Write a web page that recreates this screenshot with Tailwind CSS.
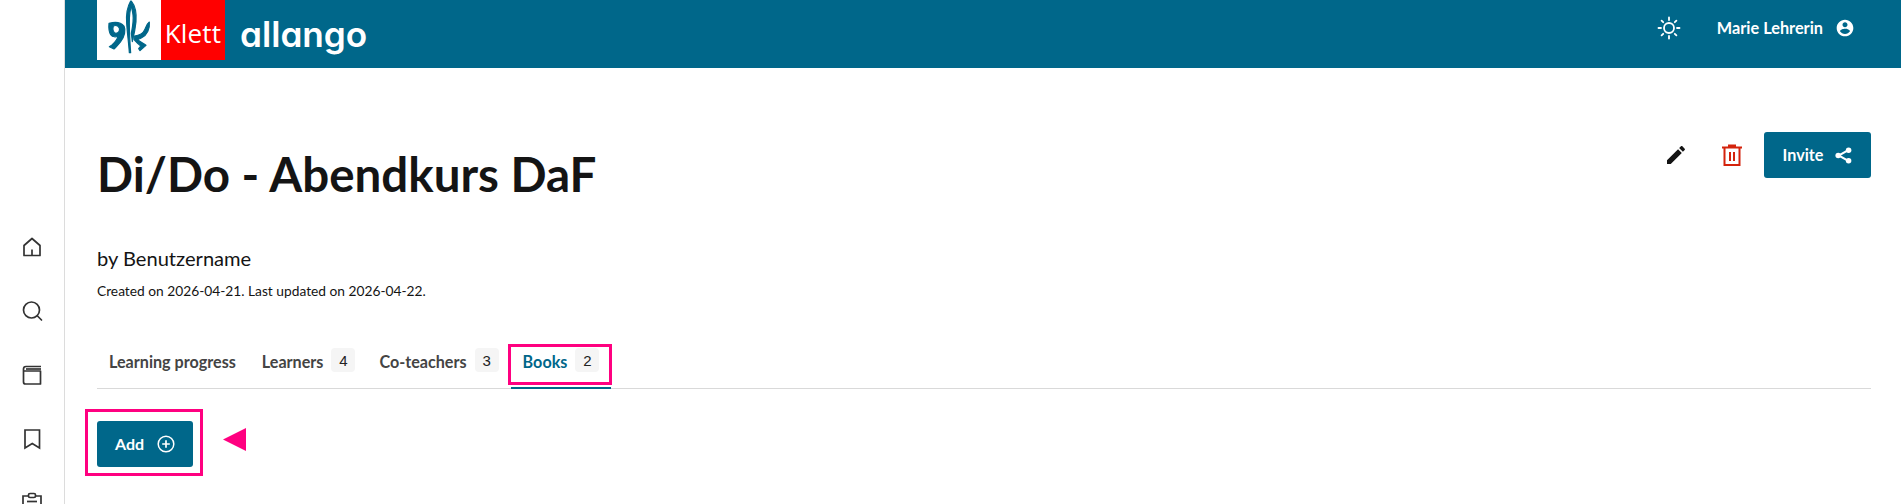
<!DOCTYPE html>
<html lang="en">
<head>
  <meta charset="utf-8" />
  <title>Di/Do - Abendkurs DaF</title>
  <script src="https://cdn.jsdelivr.net/npm/@tailwindcss/browser@4"></script>
</head>
<body class="h-[504px] overflow-hidden flex bg-white text-[#141414] font-['Lato',sans-serif]">
  <!-- Sidebar -->
  <aside class="w-[65px] shrink-0 border-r border-[#dcdcdc] flex flex-col items-center pt-[235px] gap-10 text-[#333]">
    <svg class="size-6 shrink-0" viewBox="0 0 24 24" fill="none" stroke="currentColor" stroke-width="1.7" stroke-linejoin="round"><path d="M4 10.500 12 3.500l8 7V20.500H4z"/><path d="M12 20.500v-6"/></svg>
    <svg class="size-6 shrink-0" viewBox="0 0 24 24" fill="none" stroke="currentColor" stroke-width="1.7" stroke-linecap="round"><circle cx="11.500" cy="11" r="8"/><path d="m17.500 17 4 4"/></svg>
    <svg class="size-6 shrink-0" viewBox="0 0 24 24" fill="none" stroke="currentColor" stroke-width="1.7" stroke-linejoin="round"><path d="M21 3.500H6A2.500 2.500 0 0 0 3.500 6v13A2 2 0 0 0 5.500 21H20.500V8H3.800"/><path d="M6 6h15"/></svg>
    <svg class="size-6 shrink-0" viewBox="0 0 24 24" fill="none" stroke="currentColor" stroke-width="1.7" stroke-linejoin="miter"><path d="M5 3h14.500v18l-7.250-4.500L5 21z"/></svg>
    <svg class="size-6 shrink-0" viewBox="0 0 24 24" fill="none" stroke="currentColor" stroke-width="1.7"><path d="M8.500 5H3v17h18V5h-5.500"/><rect x="8.500" y="2.500" width="7" height="4" rx="1.500"/><path d="M7 10.500h10"/></svg>
  </aside>

  <div class="flex-1 min-w-0 flex flex-col">
    <!-- Header -->
    <header class="h-[68px] shrink-0 bg-[#00678a] text-white flex pl-8 pr-[46px]">
      <div class="flex h-[60px]">
        <div class="w-16 bg-white">
          <svg class="w-16 h-[60px]" viewBox="21 0 192 180" fill="#00678a" stroke="#00678a" stroke-width="3.500" stroke-linejoin="round">
            <path d="M122 3C112 20 108 45 110 70C112 100 116 130 118 158L122 158C120 130 118 95 118 70C118 50 119 30 124 20Z"/>
            <path d="M124 3C134 15 140 40 138 65C136 85 132 105 127 125L124 100C128 80 131 60 129 45C128 35 126 28 124 20Z"/>
            <path fill-rule="evenodd" d="M57 70C72 66 92 66 102 78C108 90 104 110 92 125C84 135 78 142 72 147L58 140L66 135C74 128 82 118 85 107C78 112 68 112 62 104C56 94 56 80 57 70ZM70 78C67 88 70 100 78 100C86 100 90 92 88 84C84 77 76 75 70 78Z"/>
            <path d="M178 66C180 85 172 105 155 113C150 116 146 117 142 118C150 125 160 130 168 136L150 152L146 146L152 138C145 132 136 125 132 118L133 108C147 107 160 100 165 88C168 80 170 72 178 66Z"/>
          </svg>
        </div>
        <div class="w-16 bg-[#ff0000] flex items-center justify-center pt-[6px] text-[26px] tracking-[0.2px] font-['Open_Sans',sans-serif]">Klett</div>
        <div class="ml-[15px] pt-[10px] text-[35.200px] font-semibold leading-[48px] font-['Inter',sans-serif] [font-feature-settings:'cv11']">allango</div>
      </div>
      <div class="ml-auto flex items-start gap-[36px] pt-4">
        <svg class="size-6" viewBox="0 0 24 24" fill="none" stroke="currentColor" stroke-width="1.800" stroke-linecap="round"><circle cx="12" cy="12" r="5"/><path d="M12 1.500v2.500M12 20v2.500M1.500 12H4M20 12h2.500M4.600 4.600l1.600 1.600M17.800 17.800l1.600 1.600M4.600 19.400l1.600-1.600M17.800 6.200l1.600-1.600"/></svg>
        <div class="flex items-center gap-3 h-6">
          <span class="text-[16.300px] font-bold">Marie Lehrerin</span>
          <svg class="size-5" viewBox="0 0 24 24" fill="currentColor"><path d="M12 2C6.480 2 2 6.480 2 12s4.480 10 10 10 10-4.480 10-10S17.520 2 12 2zm0 3c1.660 0 3 1.340 3 3s-1.340 3-3 3-3-1.340-3-3 1.340-3 3-3zm0 14.200c-2.500 0-4.710-1.280-6-3.220.03-1.990 4-3.080 6-3.080 1.990 0 5.970 1.090 6 3.080-1.290 1.940-3.500 3.220-6 3.220z"/></svg>
        </div>
      </div>
    </header>

    <main class="pl-8 pr-[30px] pt-16">
      <!-- Title row -->
      <div class="flex justify-between items-start h-[212px]">
        <div class="pt-3">
          <h1 class="text-[47.500px] leading-[60px] font-bold">Di/Do - Abendkurs DaF</h1>
          <p class="mt-[42px] text-[20.100px] leading-6">by Benutzername</p>
          <p class="mt-[11px] text-[13.750px] leading-5">Created on 2026-04-21. Last updated on 2026-04-22.</p>
        </div>
        <div class="flex items-center">
          <button class="size-6 text-[#141414] mr-8">
            <svg class="size-6" viewBox="0 0 24 24" fill="currentColor"><path d="M3 17.250V21h3.750L17.810 9.940l-3.750-3.750L3 17.250zM20.710 7.040c.39-.39.39-1.020 0-1.410l-2.340-2.340c-.39-.39-1.020-.39-1.410 0l-1.830 1.830 3.750 3.750 1.830-1.830z"/></svg>
          </button>
          <button class="size-6 text-[#d4230c] mr-5">
            <svg class="size-6" viewBox="0 0 24 24" fill="none" stroke="currentColor" stroke-width="2"><path d="M2 4.500h20M8 2.500h8M4.500 5v17h15V5M10 9v9M14 9v9"/></svg>
          </button>
          <button class="h-[46px] w-[107px] rounded-[3px] bg-[#00678a] text-white text-[16.200px] font-bold flex items-center justify-center gap-[12px]">
            Invite
            <svg class="size-[17px]" viewBox="0 0 16 16" fill="currentColor" stroke="currentColor"><path d="M12.500 3 3.500 8l9 5" fill="none" stroke-width="1.900"/><circle cx="12.800" cy="3" r="2.600" stroke="none"/><circle cx="3" cy="8" r="2.600" stroke="none"/><circle cx="12.800" cy="13" r="2.600" stroke="none"/></svg>
          </button>
        </div>
      </div>

      <!-- Tabs -->
      <nav class="flex border-b border-[#d9d9d9] h-[45px] text-[16.150px] font-bold text-[#444]">
        <a class="px-3 pt-1 flex items-start leading-[27px] mr-[2px]">Learning progress</a>
        <a class="px-3 pt-1 flex items-start leading-[27px] gap-2">Learners <span class="size-6 pt-px rounded bg-[#f5f5f5] font-['Liberation_Sans',sans-serif] font-normal text-[#222] text-[15px] leading-none flex items-center justify-center">4</span></a>
        <a class="px-3 pt-1 flex items-start leading-[27px] gap-2">Co-teachers <span class="size-6 pt-px rounded bg-[#f5f5f5] font-['Liberation_Sans',sans-serif] font-normal text-[#222] text-[15px] leading-none flex items-center justify-center">3</span></a>
        <a class="relative px-3 pt-1 h-[45px] flex items-start leading-[27px] gap-2 text-[#00678a] border-b-2 border-[#00678a]">Books <span class="size-6 pt-px rounded bg-[#f5f5f5] font-['Liberation_Sans',sans-serif] font-normal text-[#222] text-[15px] leading-none flex items-center justify-center">2</span>
          <span class="absolute left-[-3px] top-0 w-[104px] h-[41px] border-[3px] border-[#ff0080]"></span>
        </a>
      </nav>

      <!-- Add -->
      <div class="relative mt-8">
        <button class="h-[46px] w-[96px] rounded-[3px] bg-[#00678a] text-white text-base font-bold flex items-center justify-center gap-[13px]">
          Add
          <svg class="size-[18px]" viewBox="0 0 18 18" fill="none" stroke="currentColor" stroke-width="1.500"><circle cx="9" cy="9" r="7.800"/><path d="M9 5.200v7.600M5.200 9h7.600" stroke-width="1.700"/></svg>
        </button>
        <span class="absolute left-[-12px] top-[-12px] w-[118px] h-[67px] border-[3px] border-[#ff0080]"></span>
        <span class="absolute left-[126px] top-[7px] w-[23px] h-[23px] bg-[#ff0080] [clip-path:polygon(0_50%,100%_0,100%_100%)]"></span>
      </div>
    </main>
  </div>
</body>
</html>
